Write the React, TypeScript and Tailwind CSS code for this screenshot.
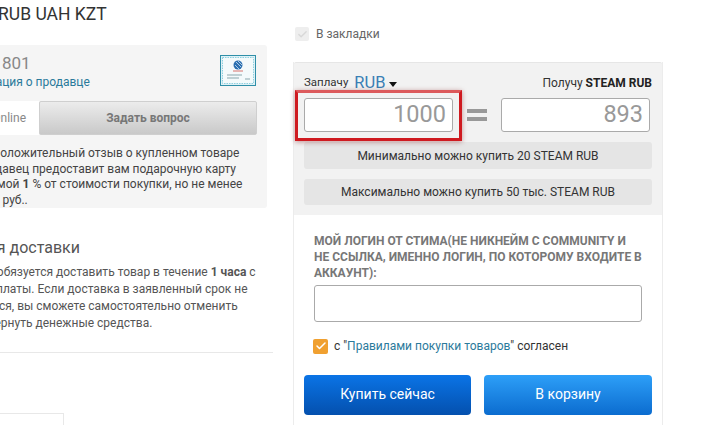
import { Check } from "lucide-react";

const font = { fontFamily: "Roboto, 'Liberation Sans', sans-serif" };

const Certificate = () => (
  <svg width="36" height="31" viewBox="0 0 36 31" className="shrink-0 mt-[2px]">
    <rect x="0.5" y="0.5" width="35" height="30" fill="#dff1f6" stroke="#2f8fa8" />
    <rect x="2.5" y="2.5" width="31" height="26" fill="#f4fafb" stroke="#8fd0df" strokeDasharray="1.5 1" />
    <circle cx="18" cy="10" r="4.5" fill="#2a6fb0" />
    <path d="M16 7l5 5M15 10l4 4M18 6l4 4" stroke="#cfe3f1" strokeWidth="0.8" />
    <path d="M13 16h10" stroke="#d9736c" strokeWidth="1" />
    <path d="M7 20h15M7 23h12M25 24h5" stroke="#8aa7ad" strokeWidth="1" />
  </svg>
);

export default function App() {
  return (
    <div
      style={font}
      className="flex w-[728px] h-[425px] overflow-hidden bg-white text-[#444]"
    >
      {/* left column, cut by the window edge */}
      <div className="w-[273px] shrink-0 flex flex-col">
        <h1 className="pt-[2px] ml-[-2px] text-[17.5px] leading-[24px] text-[#333] whitespace-nowrap">
          RUB UAH KZT
        </h1>
        <div className="mt-[19px] w-[267px] h-[172px] bg-[#f5f5f5] rounded-r-[3px] flex flex-col">
          <div className="flex justify-between pt-[8px] pr-[11px]">
            <div>
              <div className="ml-[2px] text-[17px] leading-[20px] text-[#888]">801</div>
              <div className="ml-[-51px] mt-[1px] text-[12px] leading-[16px] text-[#2b7a9b] whitespace-nowrap">
                Информация о продавце
              </div>
            </div>
            <Certificate />
          </div>
          <div className="flex mt-[11px] pr-[10px]">
            <div className="w-[39px] h-[34px] bg-white flex items-center justify-end pr-[13px] text-[12px] text-[#888]">
              Online
            </div>
            <button className="flex-1 h-[34px] rounded-[2px] border border-[#cfcfcf] bg-gradient-to-b from-[#ececec] to-[#c9c9c9] text-[12px] font-bold text-[#777]">
              Задать вопрос
            </button>
          </div>
          <div className="mt-[11px] text-[12px] leading-[15.6px] text-[#444] whitespace-nowrap">
            <p className="ml-[-61px]">Оставьте положительный отзыв о купленном товаре</p>
            <p className="ml-[-25px]">продавец предоставит вам подарочную карту</p>
            <p className="ml-[-24px]">
              суммой <b>1</b> % от стоимости покупки, но не менее
            </p>
            <p className="ml-[-14px]">10 руб..</p>
          </div>
        </div>
        <h2 className="mt-[21px] ml-[-63px] pt-[9px] text-[16px] leading-[20px] text-[#555] whitespace-nowrap">
          Гарантия доставки
        </h2>
        <div className="mt-[6px] text-[12px] leading-[17px] text-[#555] whitespace-nowrap">
          <p className="ml-[-62px]">
            Продавец обязуется доставить товар в течение <b>1 часа</b> с
          </p>
          <p className="ml-[-64px]">момента оплаты. Если доставка в заявленный срок не</p>
          <p className="ml-[-57px]">выполнится, вы сможете самостоятельно отменить</p>
          <p className="ml-[-57px]">заказ и вернуть денежные средства.</p>
        </div>
        <div className="mt-[20px] h-px bg-[#e8e8e8]" />
        <div className="mt-[60px] w-[64px] h-[20px] border-t border-r border-[#e8e8e8]" />
      </div>

      {/* right column */}
      <div className="ml-[20px] w-[370px] shrink-0 flex flex-col">
        <label className="pt-[27px] flex items-center gap-[7px] text-[12px] leading-[14px] text-[#666]">
          <span className="ml-[2px] w-[14px] h-[14px] rounded-[2px] bg-[#eeeeee] flex items-center justify-center">
            <Check size={11} strokeWidth={3} color="#d8d8d8" />
          </span>
          В закладки
        </label>
        <div className="mt-[21px] flex-1 border-x border-[#ececec] flex flex-col">
          <div className="h-[153px] bg-[#f2f2f2] rounded-t-[2px] border-t border-[#e6e6e6] px-[10px] pt-[10px]">
            <div className="flex items-center justify-between h-[20px]">
              <div className="flex items-center text-[11.5px] text-[#333]">
                Заплачу
                <span className="ml-[6px] text-[16.5px] text-[#3a7fb5]">RUB</span>
                <span className="ml-[4px] mt-[2px] w-0 h-0 border-x-[4px] border-x-transparent border-t-[5px] border-t-[#111]" />
              </div>
              <div className="text-[12px] text-[#333]">
                Получу <b className="text-[#222]">STEAM RUB</b>
              </div>
            </div>
            <div className="flex items-center mt-[5px]">
              <div className="relative">
                <div className="w-[149px] h-[34px] bg-white border border-[#aaa] rounded-[3px] flex items-center justify-end pr-[6px] text-[23.5px] text-[#999]">
                  1000
                </div>
                <div className="absolute -inset-x-[9px] -top-[8px] -bottom-[9px] border-[3px] border-[#cf1a20] border-t-[#dc5a5c] shadow-[0_1px_5px_rgba(120,0,0,0.4)]" />
              </div>
              <div className="ml-[14px] w-[20px] h-[12px] flex flex-col justify-between">
                <span className="h-[4px] bg-[#999]" />
                <span className="h-[4px] bg-[#999]" />
              </div>
              <div className="ml-[14px] w-[149px] h-[34px] bg-white border border-[#aaa] rounded-[3px] flex items-center justify-end pr-[6px] text-[23.5px] text-[#999]">
                893
              </div>
            </div>
            <div className="mt-[10px] h-[27px] bg-[#e5e5e5] rounded-[3px] flex items-center justify-center text-[12px] text-[#333]">
              Минимально можно купить 20 STEAM RUB
            </div>
            <div className="mt-[10px] h-[26px] bg-[#e5e5e5] rounded-[3px] flex items-center justify-center text-[12px] text-[#333]">
              Максимально можно купить 50 тыс. STEAM RUB
            </div>
          </div>
          <div className="px-[10px] pt-[18px]">
            <div className="px-[10px] text-[12px] leading-[16px] font-bold text-[#777]">
              МОЙ ЛОГИН ОТ СТИМА(НЕ НИКНЕЙМ С COMMUNITY И НЕ ССЫЛКА, ИМЕННО ЛОГИН, ПО КОТОРОМУ ВХОДИТЕ В АККАУНТ):
            </div>
            <div className="mx-[10px] mt-[4px] h-[37px] border border-[#aaa] rounded-[3px] bg-white" />
            <div className="mt-[15px] ml-[9px] flex items-center text-[12px] text-[#333]">
              <span className="w-[15px] h-[15px] rounded-[2px] bg-[#f0a030] flex items-center justify-center">
                <Check size={12} strokeWidth={3} color="#fff" />
              </span>
              <span className="ml-[6px]">
                с "<span className="text-[#2b7a9b]">Правилами покупки товаров</span>" согласен
              </span>
            </div>
            <div className="mt-[20px] flex justify-between">
              <button className="w-[167px] h-[40px] pb-[2px] rounded-[4px] bg-gradient-to-b from-[#0b74e6] to-[#0450ae] text-[14px] text-white">
                Купить сейчас
              </button>
              <button className="w-[168px] h-[40px] pb-[2px] rounded-[4px] bg-gradient-to-b from-[#2d9ff8] to-[#0b6ccf] text-[14px] text-white">
                В корзину
              </button>
            </div>
          </div>
        </div>
      </div>
    </div>
  );
}
